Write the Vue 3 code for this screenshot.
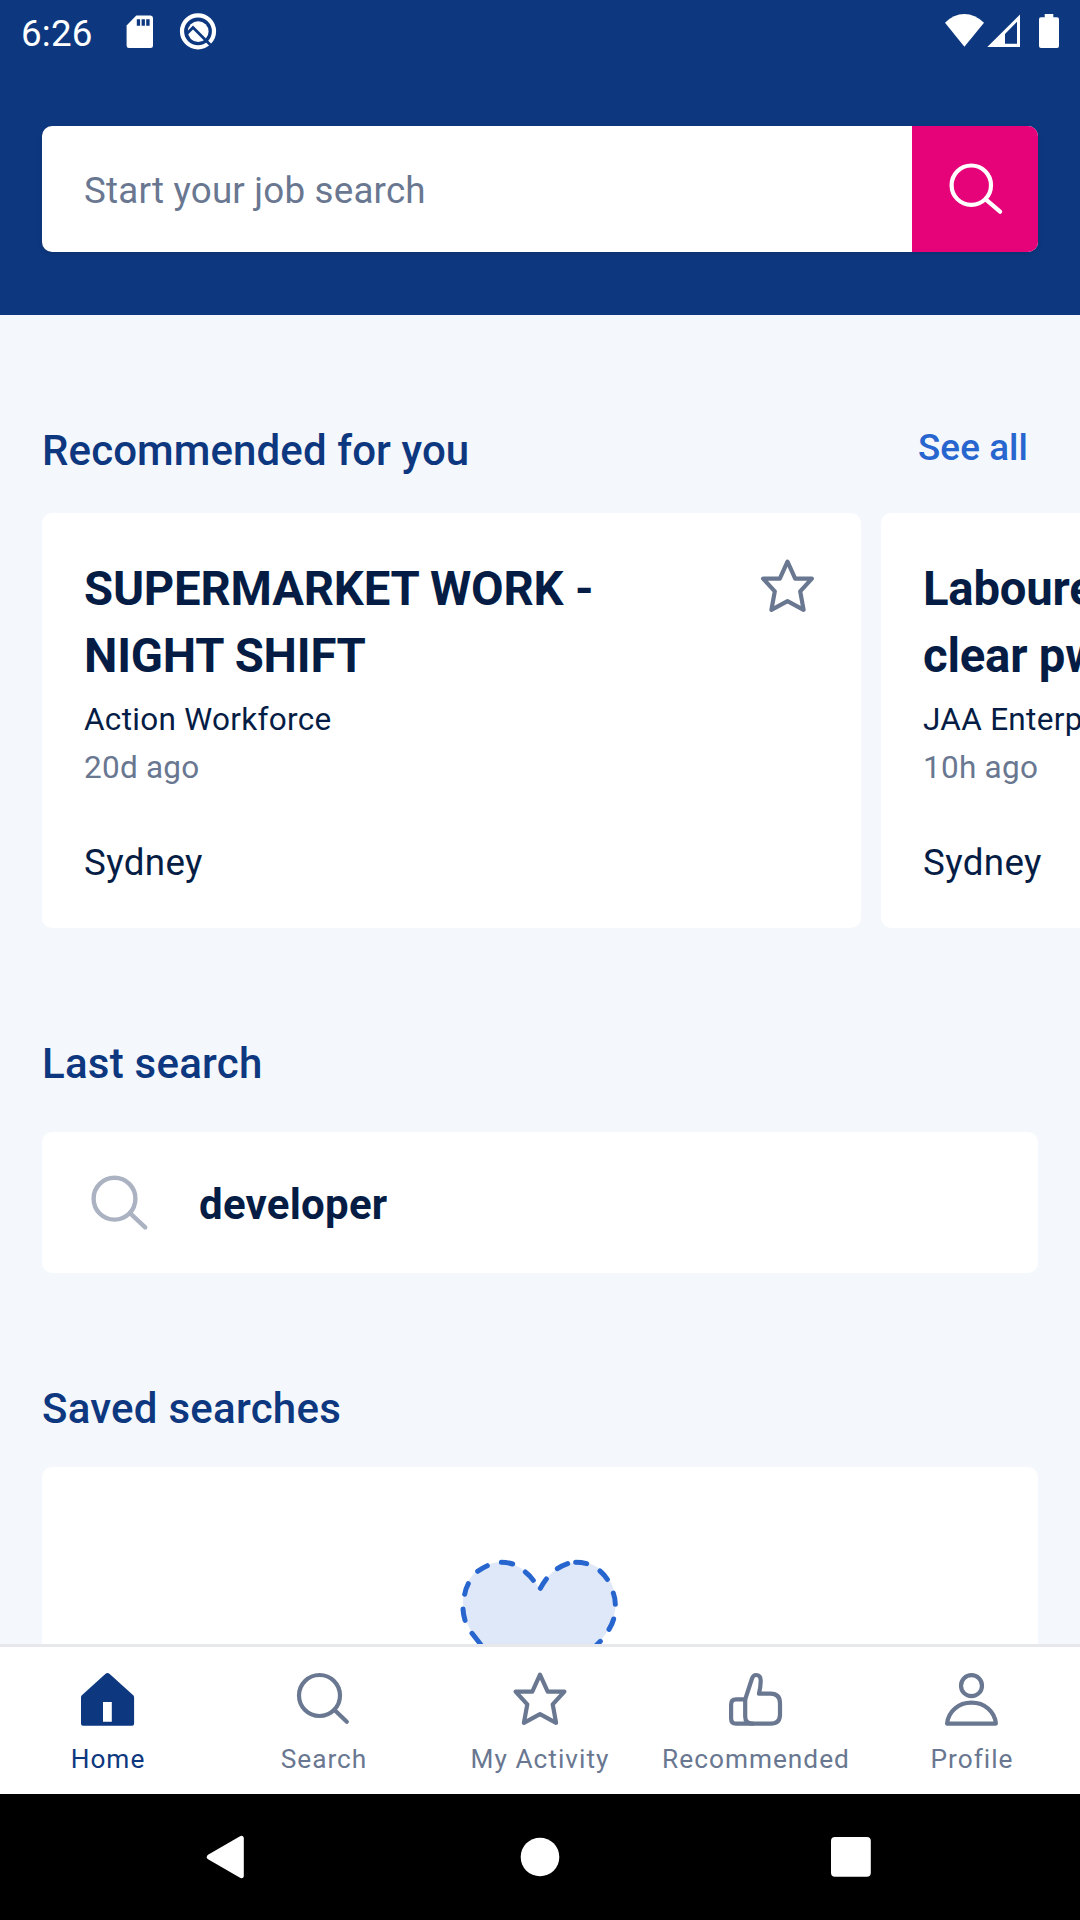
<script setup>
const jobs = [
  { title: ['SUPERMARKET WORK -', 'NIGHT SHIFT'], company: 'Action Workforce', age: '20d ago', place: 'Sydney' },
  { title: ['Labourer - must', 'clear pwc check'], company: 'JAA Enterprises', age: '10h ago', place: 'Sydney' }
]
const tabs = [
  { id: 'home', label: 'Home' },
  { id: 'search', label: 'Search' },
  { id: 'activity', label: 'My Activity' },
  { id: 'recommended', label: 'Recommended' },
  { id: 'profile', label: 'Profile' }
]
const starPath = 'M31.5 6.7L39.2 23.6H55.9L44.2 36.4L47.6 54.8L31.5 46.2L15.4 54.8L18.8 36.4L7.1 23.6H23.8Z'
</script>

<template>
  <div class="screen">
    <header class="header">
      <div class="status">
        <span class="time">6:26</span>
        <svg class="sd" width="28" height="36" viewBox="0 0 28 36">
          <path fill="#fff" d="M10.3 1.5H24.6Q27 1.5 27 4V31.5Q27 34 24.6 34H3Q.6 34 .6 31.5V11.5Z" />
          <path fill="#0d3880" d="M10.8 5.2h3.3v6.6h-3.3zM15.6 5.2h3.3v6.6h-3.3zM20.2 5.2h3.4v6.6h-3.4z" />
        </svg>
        <svg class="debug" width="38" height="38" viewBox="0 0 38 38">
          <circle cx="19" cy="19.300" r="16" fill="none" stroke="#fff" stroke-width="4.200" />
          <circle cx="19.200" cy="19.600" r="10.400" fill="#fff" />
          <path d="M8 21.500L14 15.500L31.500 33" fill="none" stroke="#0d3880" stroke-width="2.800" />
        </svg>
        <span class="spacer"></span>
        <svg width="116" height="36" viewBox="0 0 116 36" fill="#fff">
          <path d="M1 10.8Q9.500 2 20.300 2T40 10.800L20.400 34.700Z" />
          <path fill-rule="evenodd" d="M76 2.500V35H43.300ZM61 22V31.700H73V9.700Z" />
          <path d="M100.700 2H109.300V5.300H113Q115 5.300 115 7.300V34Q115 36 113 36H97Q95 36 95 34V7.300Q95 5.300 97 5.300H100.700Z" />
        </svg>
      </div>
      <div class="searchbar">
        <div class="field">Start your job search</div>
        <div class="go">
          <svg width="63" height="63" viewBox="0 0 63 63" fill="none" stroke="#fff" stroke-width="4.2" stroke-linecap="round">
            <circle cx="27.300" cy="27.200" r="19.700" /><path d="M41.700 41.300L56.100 53.700" />
          </svg>
        </div>
      </div>
    </header>

    <main class="content">
      <div class="heading first">
        <h2>Recommended for you</h2>
        <a class="all">See all</a>
      </div>
      <div class="jobs">
        <article v-for="job in jobs" :key="job.company" class="card job">
          <div class="title"><div v-for="line in job.title" :key="line">{{ line }}</div></div>
          <div class="company">{{ job.company }}</div>
          <div class="age">{{ job.age }}</div>
          <div class="place">{{ job.place }}</div>
          <svg class="star" width="63" height="63" viewBox="0 0 63 63"><path class="line" :d="starPath" /></svg>
        </article>
      </div>

      <div class="heading last"><h2>Last search</h2></div>
      <div class="card recent">
        <svg width="66" height="66" viewBox="0 0 66 66" fill="none" stroke="#abb3c2" stroke-width="4.400" stroke-linecap="round">
          <circle cx="28.500" cy="28.700" r="20.900" /><path d="M44 43.200L59.200 57.400" />
        </svg>
        <span class="term">developer</span>
      </div>

      <div class="heading saved"><h2>Saved searches</h2></div>
      <div class="card empty">
        <svg width="160" height="147" viewBox="181 100 480 441">
          <path fill="#dee8f8" d="M421 208L402 182C374 145 340 128 305 128C240 128 190 180 190 250C190 300 215 340 240 372L420 535L594 372C630 335 648 290 648 250C648 180 600 128 540 128C490 128 447 156 421 208Z" />
          <path fill="none" stroke="#2765cf" stroke-width="15" stroke-linecap="round" d="M377 157Q391 168 401 182M305 128Q323 128 339 133M234 155Q247 145 263 138M206 192Q198 207 195 224M190 268Q191 286 196 302M217 341L238 368L250 384M422 206Q430 191 440 178M473 147Q487 138 504 132M528 128Q545 128 561 132M601 154Q614 165 623 179M641 220Q647 237 647 254M642 298Q638 313 628 329M602 365L585 382" />
        </svg>
      </div>
    </main>

    <nav class="tabs">
      <div v-for="(tab, i) in tabs" :key="tab.id" class="tab" :class="{ active: i === 0 }">
        <svg width="63" height="63" viewBox="0.500 0 63 63">
          <path v-if="tab.id === 'home'" fill="currentColor" fill-rule="evenodd" d="M28.800 5.900Q31 4 33.200 5.900L57 27.400Q57.600 28.200 57.600 29.300V55.700Q57.600 57.700 55.600 57.700H6.500Q4.500 57.700 4.500 55.700V29.300Q4.500 28.200 5.100 27.400ZM26.500 34V53.700H35.300V34Z" />
          <g v-else-if="tab.id === 'search'" class="line"><circle cx="27" cy="27.500" r="20.500" /><path d="M42.300 42.300L54.300 53.800" /></g>
          <path v-else-if="tab.id === 'activity'" class="line" :d="starPath" />
          <g v-else-if="tab.id === 'recommended'" class="line">
            <path d="M20.700 31.400L27.500 10.500Q28.800 7 31.500 7Q36.200 7 36.200 12.500Q36.300 18 34.500 25.700H46Q55.500 25.700 55.500 35.300V46.500Q55.500 55.700 46 55.700H28Q20.700 55.700 20.700 48.500Z" />
            <path d="M20.700 31.400H11.500Q6.600 31.400 6.600 36.500V50.500Q6.600 55.700 11.500 55.700H28" />
          </g>
          <g v-else class="line"><circle cx="31" cy="17.700" r="10.500" /><path d="M6.600 55.600H55.400C54.300 43.500 44 34.700 31 34.700S7.700 43.500 6.600 55.600Z" /></g>
        </svg>
        <span class="label">{{ tab.label }}</span>
      </div>
    </nav>

    <div class="system">
      <svg width="1080" height="126" viewBox="0 0 1080 126" fill="#fff">
        <path stroke="#fff" stroke-width="5" stroke-linejoin="round" d="M209.300 63L241.300 44.300V81.700Z" />
        <circle cx="540" cy="63" r="19.300" />
        <rect x="831" y="43" width="39.800" height="39.800" rx="4" />
      </svg>
    </div>
  </div>
</template>

<style>
body { margin: 0; background: #000; }
</style>

<style scoped>
* { box-sizing: border-box; }
.screen { width: 1080px; height: 1920px; display: flex; flex-direction: column; overflow: hidden; background: #f4f7fc; font-family: "Roboto", sans-serif; letter-spacing: 0.25px; color: #051d45; white-space: nowrap; }
svg { display: block; flex: none; }
.header { height: 315px; flex: none; background: #0d3880; }
.status { height: 63px; display: flex; align-items: flex-start; padding: 12px 20px 0 21px; }
.time { font-size: 36.75px; line-height: 43px; letter-spacing: 0.2px; color: #fff; width: 105px; }
.sd { margin-top: 2px; }
.debug { margin: 0 0 0 25px; }
.spacer { flex: 1; }
.searchbar { margin: 63px 42px 0; height: 126px; display: flex; border-radius: 10px; overflow: hidden; background: #fff; box-shadow: 0 2px 5px rgba(0, 0, 0, 0.14); }
.field { flex: 1; padding: 3px 42px 0; font-size: 36.75px; line-height: 124px; letter-spacing: 0.19px; color: #697791; }
.go { width: 126px; background: #e60278; display: flex; align-items: center; justify-content: center; }
.content { flex: 1; min-height: 0; overflow: hidden; }
.heading { display: flex; justify-content: space-between; padding: 0 53px 0 42px; }
h2 { margin: 0; font-size: 42px; line-height: 60px; font-weight: 500; color: #0d3880; }
.first { padding-top: 106px; margin-bottom: 32px; }
.first h2 { letter-spacing: 0.1px; }
.all { font-size: 36.75px; line-height: 60px; font-weight: 500; color: #2765cf; margin: -3px -1px 0 0; height: 60px; letter-spacing: 0.1px; }
.last { padding-top: 106px; margin-bottom: 38px; }
.saved { padding-top: 106px; margin-bottom: 28px; }
.card { background: #fff; border-radius: 10px; }
.jobs { display: flex; gap: 20px; padding-left: 42px; }
.job { position: relative; flex: none; width: 819px; height: 415px; padding: 43px 42px 0; }
.title { font-size: 47.25px; line-height: 67px; font-weight: 700; letter-spacing: -0.19px; }
.company, .age { font-size: 31.5px; line-height: 48px; }
.company { margin-top: 6px; letter-spacing: 0.3px; }
.age { color: #697791; }
.place { font-size: 36.75px; line-height: 48px; margin-top: 47px; letter-spacing: 0.35px; }
.star { position: absolute; right: 42px; top: 42px; color: #697791; }
.line { fill: none; stroke: currentColor; stroke-width: 4.2; stroke-linecap: round; stroke-linejoin: round; }
.recent { margin: 0 42px; height: 141px; padding-left: 44px; display: flex; align-items: center; }
.term { font-size: 42px; line-height: 60px; font-weight: 700; margin-left: 47px; padding-top: 4px; }
.empty { margin: 0 42px; height: 420px; padding-top: 86px; display: flex; justify-content: center; }
.tabs { height: 150px; flex: none; border-top: 3px solid #e6e8ec; background: #fff; padding-top: 21px; display: flex; }
.tab { width: 216px; display: flex; flex-direction: column; align-items: center; color: #697791; }
.label { font-size: 26.25px; line-height: 32px; letter-spacing: 1px; margin-top: 12px; }
.active { color: #0d3880; }
.system { height: 126px; flex: none; background: #000; }
</style>
